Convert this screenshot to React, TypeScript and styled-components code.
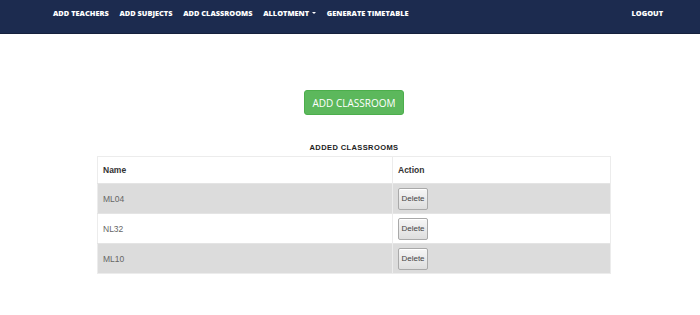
import React from "react";
import styled, { createGlobalStyle } from "styled-components";

const Global = createGlobalStyle`
  html, body { margin: 0; padding: 0; background: #fff; }
  body { font-family: "Liberation Sans", Arial, sans-serif; }
`;

const Nav = styled.nav`
  height: 34px;
  background: #1c2b4f;
  border-bottom: 1px solid #16213d;
  display: flex;
  align-items: center;
  padding: 0 37px 0 53px;
  box-sizing: border-box;
`;

const NavList = styled.div`
  display: flex;
  align-items: center;
  gap: 10.7px;
  flex: 1;
`;

const NavItem = styled.a`
  font-family: "Open Sans", sans-serif;
  font-weight: 800;
  font-size: 7.4px;
  letter-spacing: 0;
  color: #fff;
  text-transform: uppercase;
  display: flex;
  align-items: center;
  gap: 3px;
  margin-top: -7px;
  white-space: nowrap;
`;

const Caret = styled.span`
  display: inline-block;
  width: 0;
  height: 0;
  border-left: 2.5px solid transparent;
  border-right: 2.5px solid transparent;
  border-top: 2.5px solid #fff;
`;

const Main = styled.main`
  display: flex;
  flex-direction: column;
  align-items: center;
  padding: 56px 0 0 8px;
`;

const AddButton = styled.button`
  font-family: "Open Sans", sans-serif;
  font-size: 10px;
  color: #fff;
  background: #5cb85c;
  border: 1px solid #4cae4c;
  border-radius: 3px;
  height: 25px;
  padding: 0 8px;
  cursor: pointer;
`;

const Title = styled.h4`
  margin: 28px 0 4px;
  font-family: "Liberation Sans", Arial, sans-serif;
  font-weight: 700;
  font-size: 7.5px;
  letter-spacing: 0.4px;
  color: #222;
`;

const Table = styled.table`
  width: 514px;
  border-collapse: collapse;
  font-family: "Liberation Sans", Arial, sans-serif;
  font-size: 8.5px;
  border: 1px solid #ececec;
`;

const HeadCell = styled.th`
  text-align: left;
  font-weight: 700;
  color: #333;
  height: 26px;
  padding: 0 5px;
  border-right: 1px solid #ececec;
  background: #fff;
  &:first-child { width: 284px; }
`;

const Row = styled.tr<{ $shaded: boolean }>`
  background: ${(p) => (p.$shaded ? "#dcdcdc" : "#fff")};
`;

const Cell = styled.td`
  height: 29px;
  padding: 0 5px;
  color: #666;
  font-weight: 400;
  border-right: 1px solid #ececec;
  border-top: 1px solid #e4e4e4;
`;

const DeleteButton = styled.button`
  font-family: "Liberation Sans", Arial, sans-serif;
  font-size: 8px;
  color: #444;
  height: 22px;
  width: 30px;
  padding: 0;
  border: 1px solid #a9a9a9;
  border-radius: 2px;
  background: linear-gradient(#f6f6f6, #dedede);
  box-shadow: inset 0 1px 0 #fff;
`;

const rooms = ["ML04", "NL32", "ML10"];

export default function App() {
  return (
    <>
      <Global />
      <Nav>
        <NavList>
          <NavItem>Add Teachers</NavItem>
          <NavItem>Add Subjects</NavItem>
          <NavItem>Add Classrooms</NavItem>
          <NavItem>
            Allotment <Caret />
          </NavItem>
          <NavItem>Generate Timetable</NavItem>
        </NavList>
        <NavItem>Logout</NavItem>
      </Nav>
      <Main>
        <AddButton>ADD CLASSROOM</AddButton>
        <Title>ADDED CLASSROOMS</Title>
        <Table>
          <thead>
            <tr>
              <HeadCell>Name</HeadCell>
              <HeadCell>Action</HeadCell>
            </tr>
          </thead>
          <tbody>
            {rooms.map((r, i) => (
              <Row key={r} $shaded={i % 2 === 0}>
                <Cell>{r}</Cell>
                <Cell>
                  <DeleteButton>Delete</DeleteButton>
                </Cell>
              </Row>
            ))}
          </tbody>
        </Table>
      </Main>
    </>
  );
}
